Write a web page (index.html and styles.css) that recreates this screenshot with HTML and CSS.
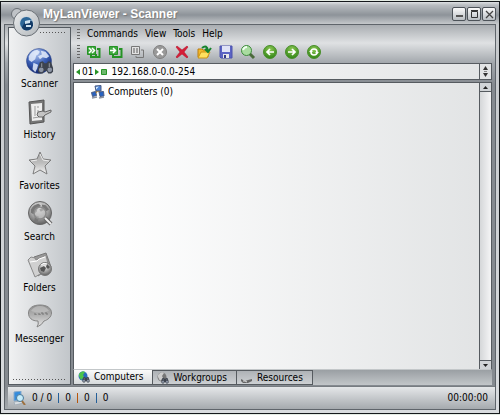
FILE: index.html
```html
<!DOCTYPE html>
<html lang="en">
<head>
    <meta charset="UTF-8">
    <meta name="viewport" content="width=device-width, initial-scale=1.0">
    <title>MyLanViewer - Scanner</title>
    <link rel="stylesheet" href="styles.css">
</head>
<body>
    <!-- Shared gradients and small symbols -->
    <svg class="defs" width="0" height="0" aria-hidden="true">
        <defs>
            <radialGradient id="blue" cx=".4" cy=".2" r=".85"><stop offset="0" stop-color="#b4c8f0"/><stop offset=".5" stop-color="#3d62b8"/><stop offset="1" stop-color="#0b1d66"/></radialGradient>
            <radialGradient id="gray" cx=".45" cy=".3" r=".75"><stop offset="0" stop-color="#f4f4f4"/><stop offset=".55" stop-color="#a2a2a2"/><stop offset="1" stop-color="#555"/></radialGradient>
            <linearGradient id="silver" x1="0" y1="0" x2="0" y2="1"><stop offset="0" stop-color="#a5a5a5"/><stop offset=".5" stop-color="#bdbdbd"/><stop offset="1" stop-color="#f4f4f4"/></linearGradient>
            <linearGradient id="bubble" x1="0" y1="0" x2="0" y2="1"><stop offset="0" stop-color="#8c8c8c"/><stop offset=".5" stop-color="#b4b4b4"/><stop offset="1" stop-color="#e6e6e6"/></linearGradient>
            <radialGradient id="green" cx=".5" cy=".3" r=".7"><stop offset="0" stop-color="#8fc957"/><stop offset="1" stop-color="#2f8414"/></radialGradient>
            <linearGradient id="chrome" x1="0" y1="0" x2="1" y2="1"><stop offset="0" stop-color="#eceeef"/><stop offset="1" stop-color="#b2b7bb"/></linearGradient>
            <symbol id="land" viewBox="0 0 28 28">
                <path d="M3 9Q6 3 12 2l3 2-2 3-2 1-1 4-4 3-3-2zM16 3l5 1 4 5-3 2-4-1-3 2-2-3 4-2zM8 16l5 2-1 4-2 4-3-3z"/>
            </symbol>
            <symbol id="binoculars" viewBox="0 0 18 14">
                <path d="M3 2l3-1 2 2h2l2-2 3 1 2 6v4l-2 2h-3l-2-3H8l-2 3H3l-2-2V8z" fill="#3d434e"/>
                <circle cx="4.500" cy="10" r="2.500" fill="#8e96a6"/><circle cx="13.500" cy="10" r="2.500" fill="#8e96a6"/>
                <path d="M5 3v4M13 3v4" stroke="#9ba0a9"/>
            </symbol>
        </defs>
    </svg>

    <div class="window">
        <!-- Title bar -->
        <header class="titlebar">
            <h1 class="title">MyLanViewer - Scanner</h1>
            <button class="win-btn" aria-label="Minimize"><svg width="13" height="13"><rect x="3" y="7" width="7" height="2" fill="#555"/></svg></button>
            <button class="win-btn" aria-label="Maximize"><svg width="13" height="13"><path d="M3.500 3.500h6v6h-6zM3 2.500h7" fill="none" stroke="#333"/></svg></button>
            <button class="win-btn" aria-label="Close"><svg width="13" height="13"><path d="M3 3l7 7M10 3l-7 7" stroke="#444" stroke-width="1.300"/></svg></button>
        </header>

        <!-- Round program logo over the corner -->
        <svg class="logo" width="34" height="32" viewBox="0 0 34 32" aria-hidden="true">
            <circle cx="7" cy="8" r="5.500" fill="#bfc3c7" stroke="#6a7076"/>
            <circle cx="16.500" cy="17" r="13" fill="url(#chrome)" stroke="#6a7076"/>
            <circle cx="16.500" cy="17.500" r="7" fill="#7fa6c4" stroke="#d7dce0"/>
            <path d="M10.500 16a6 6 0 0 1 11-2l-6 1-3 7q-3-3-2-6z" fill="#2d6697"/>
            <path d="M12 21l3-5 7-1a6 6 0 0 1-10 7z" fill="#123a66"/>
            <path d="M15 15l5-1v3l-5 1zM16 19h5v2h-5z" fill="#cfe2ef"/>
        </svg>

        <div class="frame">
            <div class="workspace">
                <!-- Side navigation -->
                <nav class="sidebar">
                    <div class="dots dots-top"></div>
                    <button class="nav-item">
                        <svg width="28" height="28" viewBox="0 0 28 28"><circle cx="13" cy="14" r="12.500" fill="url(#blue)" stroke="#263f83" stroke-width=".5"/><use href="#land" width="26" height="28" fill="#e5edfb" fill-opacity=".85"/><use href="#binoculars" x="11" y="13" width="17" height="14"/></svg>
                        <span>Scanner</span>
                    </button>
                    <button class="nav-item">
                        <svg width="28" height="28" viewBox="0 0 28 28"><path d="M3 4l15-2v22L4 26z" fill="#777" stroke="#555"/><path d="M5 6l11-1v17L6 23z" fill="#eee"/><path d="M9 8v10M12 8v2M12 12v2M7 20l6-1" stroke="#999"/><path d="M12 14l5-1 2 1 6-2v2l-6 3-2 2h-4l-2-2z" fill="#c4c4c4" stroke="#666"/></svg>
                        <span>History</span>
                    </button>
                    <button class="nav-item">
                        <svg width="28" height="28" viewBox="0 0 28 28"><path d="M14 3l3 7 8 1-6 6 2 8-7-4-7 4 2-8-6-6 8-1z" fill="url(#silver)" stroke="#7c7c7c" stroke-linejoin="round"/><path d="M14 5l3 6 6 1M5 12l6-1" fill="none" stroke="#efefef"/></svg>
                        <span>Favorites</span>
                    </button>
                    <button class="nav-item">
                        <svg width="28" height="28" viewBox="0 0 28 28"><circle cx="14" cy="13" r="11.500" fill="url(#gray)" stroke="#666"/><use href="#land" x="2" y="2" width="24" height="23" fill="#777"/><circle cx="14" cy="13" r="6" fill="#c4c4c4" fill-opacity=".6" stroke="#8a8a8a" stroke-width="1.500"/><path d="M19 18l6 6" stroke="#666" stroke-width="4"/><path d="M19 18l6 6" stroke="#eee" stroke-width="2"/></svg>
                        <span>Search</span>
                    </button>
                    <button class="nav-item">
                        <svg width="28" height="28" viewBox="0 0 28 28"><path d="M8 6l12-4 5 14-13 9z" fill="#999" stroke="#777"/><path d="M2 9l3-3 4 1 1 2 10-5 3 14-14 8z" fill="#d0d0d0" stroke="#8a8a8a"/><path d="M4 11l7-1 2-2 6-2" fill="none" stroke="#fff"/><circle cx="19" cy="18" r="6.500" fill="url(#gray)" stroke="#777"/><path d="M14 17l4-2 2 2-2 4-3-1zM21 13l3 3-2 2-2-2z" fill="#555"/><path d="M15 14q3-3 6-1" fill="none" stroke="#fff"/></svg>
                        <span>Folders</span>
                    </button>
                    <button class="nav-item">
                        <svg width="28" height="28" viewBox="0 0 28 28"><path d="M14 3c7 0 11.500 3 11.500 8 0 4-4 7-7.500 8q-2 4-7 6 2-3 1-6c-6 0-9.500-3-9.500-8S7 3 14 3z" fill="url(#bubble)" stroke="#848484"/><path d="M5 9q3-5 9-5t9 5q-9 3-18 0" fill="#c8c8c8" fill-opacity=".6"/><path d="M8 12h2v1M12 12h2v1M17 13v-2h-2M21 13v-2h-2" fill="none" stroke="#777"/></svg>
                        <span>Messenger</span>
                    </button>
                    <div class="dots dots-bottom"></div>
                </nav>

                <main class="content">
                    <!-- Menu -->
                    <div class="menubar">
                        <i class="grip"></i>
                        <button>Commands</button>
                        <button>View</button>
                        <button>Tools</button>
                        <button>Help</button>
                    </div>

                    <!-- Toolbar -->
                    <div class="toolbar">
                        <i class="grip"></i>
                        <button aria-label="Scan all"><svg width="16" height="16"><path d="M1.500 2.500h8v8h-8z" fill="#3fa83f" stroke="#259325"/><path d="M3 4l2.500 2.500L3 9M6 4l2.500 2.500L6 9" fill="none" stroke="#fff" stroke-width="1.500"/><path d="M11 5h2.500v8H5v-2M10 10v2" fill="none" stroke="#259325" stroke-width="2"/></svg></button>
                        <button aria-label="Scan"><svg width="16" height="16"><path d="M1.500 2.500h8v8h-8z" fill="#3fa83f" stroke="#259325"/><path d="M2 6.500h6M5 4l2.500 2.500L5 9" fill="none" stroke="#fff" stroke-width="1.500"/><path d="M11 5h2.500v8H5v-2" fill="none" stroke="#259325" stroke-width="2"/></svg></button>
                        <button aria-label="Pause"><svg width="16" height="16"><path d="M1.500 2.500h8v8h-8z" fill="#e2e2e2" stroke="#777"/><path d="M4 4v5M7 4v5" stroke="#888" stroke-width="1.500"/><path d="M11 6h2.500v7.500H6V12" fill="none" stroke="#777"/></svg></button>
                        <button aria-label="Stop"><svg width="16" height="16"><circle cx="8" cy="8" r="6.500" fill="#999" stroke="#808080"/><path d="M5 5l6 6M11 5l-6 6" stroke="#fff" stroke-width="2"/></svg></button>
                        <button aria-label="Delete"><svg width="16" height="16"><path d="M2 3l1-1 5 4 5-4 1 1-4 5 4 5-1 1-5-4-5 4-1-1 4-5z" fill="#d51f38" stroke="#b00b25" stroke-width=".5"/></svg></button>
                        <button aria-label="Open"><svg width="16" height="16"><path d="M2 5h4l1 1h5v7H2z" fill="#f3b92a" stroke="#bb7d10"/><path d="M2 14l3-6h9l-3 6z" fill="#ffe15e" stroke="#cc9418"/><path d="M6 4q5-4 6 3M9 5l3 3 3-4" fill="none" stroke="#16832d" stroke-width="2"/></svg></button>
                        <button aria-label="Save"><svg width="16" height="16"><path d="M2 2h12v12H3l-1-1z" fill="#5b63c4" stroke="#4c52ae"/><path d="M4 2h8v6H4z" fill="#dfe2f6"/><path d="M5 10h6v4H5z" fill="#e8e8e8"/><path d="M6 11h2v3H6z" fill="#333a86"/></svg></button>
                        <button aria-label="Find"><svg width="16" height="16"><path d="M9 9l5 5" stroke="#4c6a3c" stroke-width="3"/><circle cx="6.500" cy="6.500" r="5" fill="#a9dca0" stroke="#3c8a3a"/><path d="M3 6q1-3 4-3" fill="none" stroke="#f0fff0" stroke-width="2"/></svg></button>
                        <button aria-label="Back"><svg width="16" height="16"><circle cx="8" cy="8" r="6.500" fill="url(#green)" stroke="#4a8f2c"/><path d="M12 8H5M8 5L5 8l3 3" fill="none" stroke="#fff" stroke-width="1.700"/></svg></button>
                        <button aria-label="Forward"><svg width="16" height="16"><circle cx="8" cy="8" r="6.500" fill="url(#green)" stroke="#4a8f2c"/><path d="M4 8h7M8 5l3 3-3 3" fill="none" stroke="#fff" stroke-width="1.700"/></svg></button>
                        <button aria-label="Refresh"><svg width="16" height="16"><circle cx="8" cy="8" r="6.500" fill="url(#green)" stroke="#4a8f2c"/><circle cx="8" cy="8" r="3" fill="none" stroke="#fff" stroke-width="1.600"/><path d="M9 8h4l-2 2zM3 8h4L5 6z" fill="#fff"/></svg></button>
                    </div>

                    <!-- Address range -->
                    <div class="address">
                        <button aria-label="Previous range"><svg width="4" height="6"><path d="M4 0v6L0 3z" fill="#269326"/></svg></button>
                        <span>01</span>
                        <button aria-label="Next range"><svg width="4" height="6"><path d="M0 0v6l4-3z" fill="#269326"/></svg></button>
                        <button class="range-list" aria-label="Range list"><svg width="6" height="6"><path d="M.5.5h5v5h-5z" fill="#6cb86c" stroke="#269326"/></svg></button>
                        <input type="text" value="192.168.0-0.0-254" aria-label="Address range">
                        <button class="spin" aria-label="Change range"><svg width="5" height="11"><path d="M0 4l2.500-4L5 4zM0 7l2.500 4L5 7z" fill="#333"/><path d="M1 5.500h3" stroke="#888"/></svg></button>
                    </div>

                    <!-- Computers tree -->
                    <div class="tree">
                        <div class="tree-list">
                            <div class="tree-row">
                                <svg width="14" height="14" viewBox="0 0 14 14"><path d="M7 5L3 10M7 5l4 5" stroke="#d99a20" stroke-width="1.500"/><path d="M4 1l6-.5V6H5z" fill="#4c82d4" stroke="#4c5d82"/><path d="M.5 7.500l4-1 1 4-4 1zM8 7l4.500-.5.5 4.500-4 .5z" fill="#2864c4" stroke="#4c5d82"/><path d="M1 13l5-1M8 13l5-1" stroke="#8c93a0" stroke-width="1.500"/><path d="M5 2l3-.5-3 3z" fill="#d5ecff"/></svg>
                                <span>Computers (0)</span>
                            </div>
                        </div>
                        <div class="scrollbar">
                            <button aria-label="Scroll up"><svg width="5" height="3"><path d="M0 3l2.500-3L5 3z" fill="#222"/></svg></button>
                            <button aria-label="Scroll down"><svg width="5" height="3"><path d="M0 0l2.500 3L5 0z" fill="#222"/></svg></button>
                        </div>
                    </div>

                    <!-- Tabs -->
                    <div class="tabs">
                        <button class="tab active"><svg width="12" height="12"><circle cx="5" cy="5" r="4.500" fill="#2969bd"/><path d="M1 3q3-4 6-2L5 4l1 2-3 3-2-4z" fill="#4bc34a"/><use href="#binoculars" x="4" y="5" width="8" height="7"/></svg>Computers</button>
                        <button class="tab"><svg width="12" height="12"><circle cx="5" cy="5" r="4.500" fill="#777"/><path d="M1 3q3-4 6-2L5 4l1 2-3 3-2-4z" fill="#ccc"/><use href="#binoculars" x="4" y="5" width="8" height="7"/></svg>Workgroups</button>
                        <button class="tab"><svg width="12" height="12"><path d="M0 7l2 1 2 1 3-1 4-1v2l-4 2H2L0 9z" fill="#666"/><path d="M2 9h2l2 1" stroke="#ddd" fill="none"/></svg>Resources</button>
                    </div>
                </main>
            </div>

            <!-- Status bar -->
            <footer class="statusbar">
                <svg width="14" height="14"><path d="M2 1l7-1v9l-7 1z" fill="#348cdc" stroke="#88aaca"/><path d="M2 11l7-1 2 2-8 2z" fill="#d8dde1" stroke="#8796a5" stroke-width=".5"/><circle cx="8" cy="7" r="3.500" fill="#c5ecfa" stroke="#4c7998"/><path d="M10 10l3 4" stroke="#9d713f" stroke-width="2"/></svg>
                <div class="counts">
                    <span>0 / 0</span><i class="bar blue"></i>
                    <span>0</span><i class="bar orange"></i>
                    <span>0</span><i class="bar blue"></i>
                    <span>0</span>
                </div>
                <time>00:00:00</time>
            </footer>
        </div>
    </div>
</body>
</html>
```
FILE: styles.css
```css
* {
    margin: 0;
    padding: 0;
    box-sizing: border-box;
}

body {
    height: 100vh;
    padding: 1px 0;
    background: #e4ece4;
    font: 10px/14px Tahoma, "DejaVu Sans Condensed", "Noto Sans", sans-serif;
    color: #000;
}

button,
input {
    border: 0;
    background: none;
    font: inherit;
    color: inherit;
}

svg {
    display: block;
    flex: none;
}

.defs {
    position: absolute;
}

/* Window */
.window {
    position: relative;
    display: flex;
    flex-direction: column;
    height: 100%;
    padding: 0 3px 3px;
    border: 1px solid #15191c;
    background: linear-gradient(#dfe2e4 0, #b9bdc1 3px, #8d9399 13px, #c5c8cb 22px, #d9dcdf 100%);
}

.titlebar {
    display: flex;
    align-items: center;
    gap: 1px;
    height: 22px;
    padding: 2px 0 0 39px;
}

.title {
    flex: 1;
    font: bold 12px/16px "Liberation Sans", Arial, sans-serif;
    color: #fff;
    text-shadow: 1px 1px 1px #777;
}

.win-btn {
    display: grid;
    place-items: center;
    width: 14px;
    height: 14px;
    border: 1px solid #4d5359;
    border-radius: 2px;
    background: linear-gradient(#fafafa, #b9bec3);
}

.logo {
    position: absolute;
    top: 4px;
    left: 9px;
    z-index: 2;
}

/* Main frame */
.frame {
    flex: 1;
    display: flex;
    flex-direction: column;
    min-height: 0;
    border: 1px solid #5f656b;
    background: linear-gradient(#a9adb1 0, #dfe1e3 18px, #a2a7ac 38px, #858a90 60px, #858a90 94%, #a5aaae 100%);
}

.workspace {
    flex: 1;
    display: flex;
    gap: 2px;
    min-height: 0;
    padding: 2px 3px 0;
}

/* Sidebar */
.sidebar {
    display: flex;
    flex-direction: column;
    width: 63px;
    border: 1px solid #555b61;
    background: linear-gradient(90deg, #f0f1f2, #c2c6ca);
}

.nav-item {
    display: flex;
    flex-direction: column;
    align-items: center;
    gap: 2px;
    height: 51px;
}

.dots {
    height: 1px;
    margin: 0 4px;
    background: repeating-linear-gradient(90deg, #555 0 1px, transparent 1px 3px);
}

.dots-top {
    margin: 4px 4px 14px 31px;
}

.dots-bottom {
    margin-top: auto;
    margin-bottom: 4px;
}

/* Content */
.content {
    flex: 1;
    display: flex;
    flex-direction: column;
    min-width: 0;
}

.grip {
    width: 3px;
    height: 10px;
    background: repeating-linear-gradient(#666 0 1px, transparent 1px 3px);
}

.menubar {
    display: flex;
    align-items: center;
    gap: 7px;
    height: 14px;
    padding-left: 4px;
}

.toolbar {
    display: flex;
    align-items: center;
    gap: 6px;
    height: 22px;
    padding-left: 4px;
}

.toolbar .grip {
    height: 14px;
}

.address {
    display: flex;
    align-items: center;
    gap: 2px;
    height: 17px;
    padding-left: 2px;
    border: 1px solid #565b60;
    background: linear-gradient(90deg, #fff, #e2e4e5);
}

.address input {
    flex: 1;
    min-width: 0;
    padding-left: 2px;
    outline: 0;
}

.spin {
    display: grid;
    place-items: center;
    width: 12px;
    height: 100%;
    border-left: 1px solid #565b60;
}

.tree {
    flex: 1;
    display: flex;
    min-height: 0;
    margin-top: 2px;
    border: 1px solid #565b60;
    border-bottom-color: #c3c7c9;
    background: linear-gradient(90deg, #fff 10%, #e1e3e4);
}

.tree-list {
    flex: 1;
    padding: 2px 17px;
}

.tree-row {
    display: flex;
    align-items: center;
    gap: 3px;
}

.scrollbar {
    display: flex;
    flex-direction: column;
    justify-content: space-between;
    width: 12px;
    border-left: 1px solid #565b60;
    background: linear-gradient(90deg, #d5d7d9, #f5f5f6);
}

.scrollbar button {
    display: grid;
    place-items: center;
    height: 9px;
    border-bottom: 1px solid #565b60;
    background: #d1d4d7;
}

.scrollbar button:last-child {
    border-top: 1px solid #565b60;
    border-bottom: 0;
}

/* Tabs */
.tabs {
    display: flex;
    height: 15px;
    background: linear-gradient(#9a9fa3, #c2c6c9);
}

.tab {
    display: flex;
    align-items: center;
    gap: 4px;
    padding: 0 9px 0 4px;
    border: solid #565b60;
    border-width: 1px 1px 1px 0;
    background: linear-gradient(#aeb2b6, #cdd0d3);
}

.tab.active {
    border-top: 0;
    border-left-width: 1px;
    background: linear-gradient(#fafafa, #d7dadc);
}

/* Status bar */
.statusbar {
    display: flex;
    align-items: center;
    gap: 6px;
    height: 23px;
    margin: 1px 0 0 3px;
    padding: 0 7px 0 4px;
    border-top: 1px solid #777c81;
    background: linear-gradient(#e5e7e9, #a5aaae);
}

.counts {
    flex: 1;
    display: flex;
    align-items: center;
    gap: 6px;
}

.bar {
    width: 1px;
    height: 10px;
}

.blue {
    background: #245f99;
}

.orange {
    background: #b8560b;
}
```
